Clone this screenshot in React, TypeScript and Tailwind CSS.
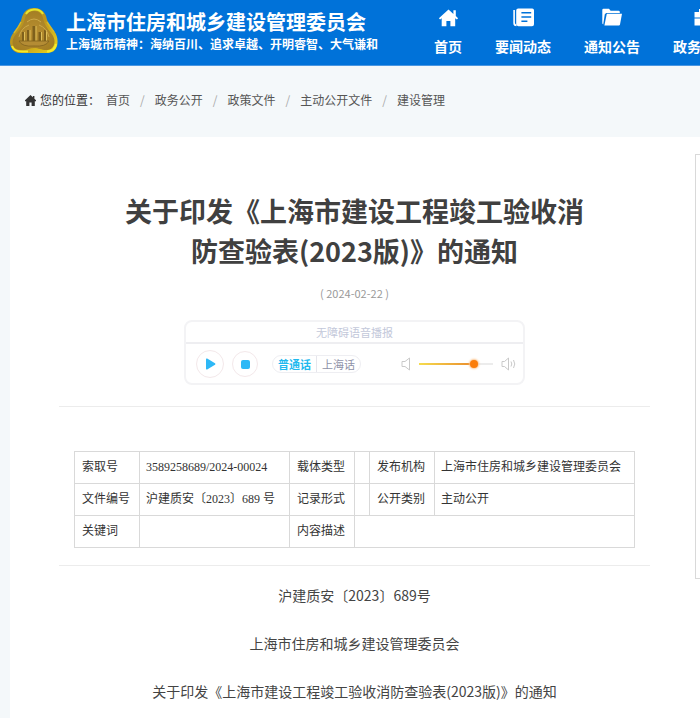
import { useState } from "react";
import type { ReactNode } from "react";

const nav: { label: string; icon: ReactNode }[] = [
  {
    label: "首页",
    icon: (
      <path d="M10.500 1.600 0.900 10.200 2.100 11.500 3.700 10.200V18.200H8.400V13H12.400V18.200H17.200V10.200L18.900 11.500 20.100 10.200 17.800 8V2.200H15.400V5.900Z" />
    ),
  },
  {
    label: "要闻动态",
    icon: (
      <path
        fillRule="evenodd"
        d="M0.300 2H1.900V14.600Q1.900 16.600 3.400 16.600V18.200Q0.300 18.200 0.300 15ZM5.200 0.500H19.200Q21 0.500 21 2.300V16.200Q21 18.200 19 18.200H5.400Q3.200 18 3.200 15.800V2.400Q3.200 0.500 5.200 0.500ZM8.400 4V5.600H18.200V4ZM8.400 8.200V9.800H18.200V8.200ZM8.400 12.400V14H14.400V12.400Z"
      />
    ),
  },
  {
    label: "通知公告",
    icon: (
      <path d="M0.300 2Q0.300 0.800 1.500 0.800H7L8.600 2.800H16.600Q17.800 2.800 17.800 4V5H4.200L2.800 6.200 1.200 16.400 0.300 15.600ZM4.800 5.800H20L18 16.400Q17.800 17.400 16.800 17.400H2.400Z" />
    ),
  },
  {
    label: "政务公开",
    icon: <path d="M3.500 4H8V1H14V4H19V9.500H3.500ZM3.500 10.500H19V17.500H3.500Z" />,
  },
];

const crumbs = ["首页", "政务公开", "政策文件", "主动公开文件", "建设管理"];

function Logo() {
  return (
    <svg className="h-[46px] w-12 shrink-0" viewBox="0 0 48 46" aria-hidden="true">
      <defs>
        <linearGradient id="gold" x1="0" y1="0" x2="1" y2="1">
          <stop offset="0" stopColor="#ad962c" />
          <stop offset="0.5" stopColor="#bf951c" />
          <stop offset="1" stopColor="#ecd71c" />
        </linearGradient>
        <radialGradient id="plate" cx="0.5" cy="0.55" r="0.6">
          <stop offset="0" stopColor="#b98f32" />
          <stop offset="1" stopColor="#a27d22" />
        </radialGradient>
      </defs>
      <path
        d="M24 0C30 0 34 3 36 8C37 14 40 18 44 23C48 28 48 34 47 38C45 43 42 45 37 45H11C6 45 3 43 1 39C-1 34 0 29 4 24C9 18 11 14 12 9C14 3 18 0 24 0Z"
        fill="url(#gold)"
      />
      <path
        d="M24 3C29 3 32 6 33 10C34 16 37 20 41 25C45 30 45 34 44 37C42 41 40 42 36 42C31 42 29 40 24 40S17 43 12 42C7 42 4 40 3 37C2 33 3 29 7 25C11 20 14 16 15 10C16 6 19 3 24 3Z"
        fill="url(#plate)"
      />
      <path d="M16 6Q18 2 24 1.500T33 6" fill="none" stroke="#e6e62e" strokeWidth="2" />
      <path d="M37 43.500Q45 43 46 36M2 38Q4 43.500 12 43.500H18" fill="none" stroke="#f3ea2a" strokeWidth="2" />
      <path d="M11 14Q8 20 4 25M37 14Q41 20 44 24" fill="none" stroke="#d6b72c" strokeWidth="1.500" />
      <path
        d="M12 33V24H14V33M17 33V22H19.500V33M22.500 33V18H25.500V33M28.500 33V24H31V33M34 33V22H36V33"
        fill="#7e601c"
      />
      <path
        d="M14.500 33V24M20 33V22M26 33V18M31.500 33V24M36.500 33V22"
        stroke="#dfc05a"
        strokeWidth="1"
      />
      <path d="M9 33H39Q36 39 24 38Q12 39 9 33Z" fill="#b48c34" stroke="#806220" strokeWidth="0.800" />
      <path d="M17 14Q24 8 31 14M9 29Q11 20 19 17M39 29Q37 20 29 17" fill="none" stroke="#cdaa4a" />
    </svg>
  );
}

function Player() {
  const [volume, setVolume] = useState(77);
  const [lang, setLang] = useState("普通话");

  return (
    <section className="mx-auto mt-[19px] h-[65px] w-[341px] rounded-lg border-2 border-[#f3f3f5] text-[11px]">
      <h2 className="flex h-[22px] items-center justify-center border-b-2 border-[#eeeef1] text-[#c3c8da]">
        无障碍语音播报
      </h2>
      <div className="flex h-10 items-center pl-[10px]">
        <button
          type="button"
          aria-label="播放"
          className="flex size-7 items-center justify-center rounded-full border border-[#f3e8ea]"
        >
          <svg className="h-3 w-[11px]" viewBox="0 0 11 12" fill="#2eb8f6">
            <path d="M1 1.200Q1 0 2.200 0.600L10 5.200Q11 6 10 6.800L2.200 11.400Q1 12 1 10.800Z" />
          </svg>
        </button>
        <button
          type="button"
          aria-label="停止"
          className="ml-2 flex size-[26px] items-center justify-center rounded-full border border-[#f3e8ea]"
        >
          <span className="size-[9px] rounded-[2px] bg-[#2eb8f6]" />
        </button>
        <div className="ml-[14px] flex h-[18px] items-center rounded-full border border-[#eeeef2]">
          {["普通话", "上海话"].map((l) => (
            <button
              key={l}
              type="button"
              onClick={() => setLang(l)}
              className={
                l === lang
                  ? "border-r border-[#e6e6ec] px-[5px] leading-4 font-bold text-[#1fb9ee]"
                  : "px-[5px] leading-4 text-[#8f92a8]"
              }
            >
              {l}
            </button>
          ))}
        </div>
        <svg
          className="ml-10 h-[14px] w-[10px] shrink-0"
          viewBox="0 0 10 14"
          fill="none"
          stroke="#c9c9c9"
        >
          <path d="M1 4.500H4L8.500 1V13L4 9.500H1Z" />
        </svg>
        <input
          type="range"
          aria-label="音量"
          value={volume}
          onChange={(e) => setVolume(Number(e.target.value))}
          className="ml-2 h-3 w-[74px] appearance-none bg-[linear-gradient(to_right,#f6dc4e,#e98a2c_75%,#ececec_76%)] bg-[length:100%_2px] bg-center bg-no-repeat [&::-webkit-slider-thumb]:size-2 [&::-webkit-slider-thumb]:appearance-none [&::-webkit-slider-thumb]:rounded-full [&::-webkit-slider-thumb]:bg-[#fb7d0a] [&::-webkit-slider-thumb]:shadow-[0_0_2px_1px_#fdc48c]"
        />
        <svg
          className="ml-2 h-[14px] w-[15px] shrink-0"
          viewBox="0 0 15 14"
          fill="none"
          stroke="#c9c9c9"
        >
          <path d="M1 4.500H3.500L7.500 1V13L3.500 9.500H1ZM10 4.500Q11.600 7 10 9.500M12.500 3Q15 7 12.500 11" />
        </svg>
      </div>
    </section>
  );
}

function InfoTable() {
  const th = "border border-[#d9d9d9] pb-[2px] pl-[7px] text-left font-normal whitespace-nowrap";
  const td = "border border-[#d9d9d9] px-[6px] pb-[2px] whitespace-nowrap";

  return (
    <div className="mx-[15px] mt-11">
      <table className="w-full table-fixed border-collapse font-['Liberation_Serif','Noto_Sans_CJK_SC',sans-serif] text-xs text-[#333]">
        <colgroup>
          <col className="w-[65px]" />
          <col className="w-[150px]" />
          <col className="w-[65px]" />
          <col className="w-[15px]" />
          <col className="w-[65px]" />
          <col />
        </colgroup>
        <tbody>
          <tr className="h-8">
            <th className={th}>索取号</th>
            <td className={td}>3589258689/2024-00024</td>
            <th className={th}>载体类型</th>
            <td className={td}></td>
            <th className={th}>发布机构</th>
            <td className={td}>上海市住房和城乡建设管理委员会</td>
          </tr>
          <tr className="h-8">
            <th className={th}>文件编号</th>
            <td className={td}>沪建质安〔2023〕689 号</td>
            <th className={th}>记录形式</th>
            <td className={td}></td>
            <th className={th}>公开类别</th>
            <td className={td}>主动公开</td>
          </tr>
          <tr className="h-8">
            <th className={th}>关键词</th>
            <td className={td}></td>
            <th className={th}>内容描述</th>
            <td className={td} colSpan={3}></td>
          </tr>
        </tbody>
      </table>
    </div>
  );
}

export default function App() {
  return (
    <div
      lang="zh-CN"
      className="flex min-h-screen flex-col overflow-hidden bg-[#f4f8fa] font-['Noto_Sans_CJK_SC',sans-serif] text-[#333]"
    >
      <header className="flex h-[66px] items-start overflow-hidden border-b border-[#4a97e2] bg-[#0072d9] text-white">
        <div className="flex w-[434px] shrink-0 gap-2 pt-2 pl-[10px]">
          <Logo />
          <div className="whitespace-nowrap">
            <p className="text-xl leading-7 font-bold">上海市住房和城乡建设管理委员会</p>
            <p className="text-xs leading-4 font-bold">
              上海城市精神：海纳百川、追求卓越、开明睿智、大气谦和
            </p>
          </div>
        </div>
        <nav className="flex shrink-0 gap-[33px] pt-2">
          {nav.map((n) => (
            <a
              key={n.label}
              href="#"
              className="flex flex-col items-center gap-[9px] text-sm leading-5 font-bold"
            >
              <svg className="h-[19px] w-[21px]" viewBox="0 0 21 19" fill="currentColor">
                {n.icon}
              </svg>
              {n.label}
            </a>
          ))}
        </nav>
      </header>

      <nav className="flex items-center pt-6 pb-[27px] pl-[25px] text-xs leading-5 text-[#555]">
        <svg className="mr-1 h-[11px] w-[11px]" viewBox="0 0 11 11" fill="#333">
          <path d="M5.500 0 0 5.200V6.200H1.200V11H4.400V7.600H6.600V11H9.800V6.200H11V5.200L9.400 3.700V1H7.900V2.200Z" />
        </svg>
        <span className="mr-[6px] text-[#333]">您的位置：</span>
        {crumbs.map((c, i) => (
          <span key={c}>
            {i > 0 && <span className="px-[10px] text-[#aaa]">/</span>}
            <a href="#">{c}</a>
          </span>
        ))}
      </nav>

      <div className="ml-[10px] flex flex-1 bg-white">
        <main className="min-w-0 flex-1 pr-[45px] pl-[49px]">
          <h1 className="px-14 pt-[54px] text-center text-[27px] leading-10 font-bold text-[#404040]">
            关于印发《上海市建设工程竣工验收消防查验表(2023版)》的通知
          </h1>
          <p className="mt-[14px] text-center text-[11px] leading-4 text-[#999]">( 2024-02-22 )</p>
          <Player />
          <hr className="mt-[21px] border-[#ececec]" />
          <InfoTable />
          <hr className="mt-[17px] border-[#ececec]" />
          <div className="mt-[5px] text-center text-sm leading-[48px] text-[#444]">
            <p>沪建质安〔2023〕689号</p>
            <p>上海市住房和城乡建设管理委员会</p>
            <p>关于印发《上海市建设工程竣工验收消防查验表(2023版)》的通知</p>
          </div>
        </main>
        <aside className="mt-[17px] h-[425px] w-[5px] shrink-0 border-y border-l border-[#d9d9d9]" />
      </div>
    </div>
  );
}
